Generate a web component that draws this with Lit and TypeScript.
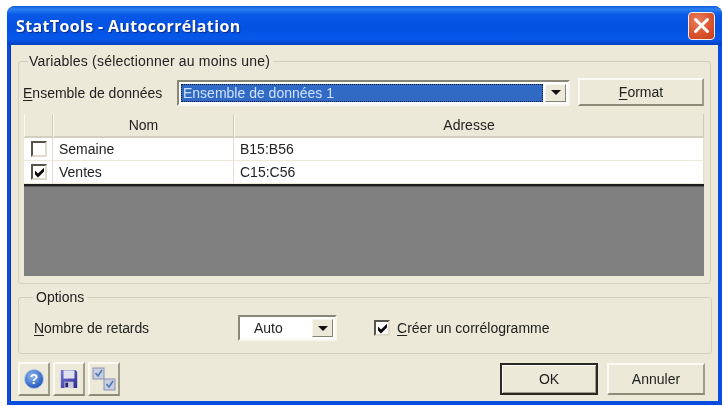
import { LitElement, html, css } from "lit";
import { customElement } from "lit/decorators.js";

@customElement("app-root")
export class AppRoot extends LitElement {
  static styles = css`
    :host { display: block; width: 723px; height: 406px; background: #fff; overflow: hidden;
      font-family: "Liberation Sans", sans-serif; font-size: 14px; color: #222; }
    * { box-sizing: border-box; }
    .page { padding: 6px 1px 0 7px; height: 406px; filter: blur(0.35px); }
    .window { height: 399px; display: flex; flex-direction: column; border-radius: 8px 8px 0 0; overflow: hidden;
      background: #0a4be0; }
    .title { height: 39px; flex: none; display: flex; align-items: center; justify-content: space-between;
      padding: 0 7px 0 9px;
      background: linear-gradient(180deg, #0f5cdc 0%, #2a80f0 8%, #0a58e6 22%, #0452e2 55%, #0658ea 85%, #0340c0 100%); }
    .title-text { color: #fff; font-family: "Open Sans", sans-serif; font-weight: 700; font-size: 16px; letter-spacing: 0.35px;
      text-shadow: 1px 1px 1px #0a2a80; white-space: nowrap; }
    .close { width: 27px; height: 28px; border: 1px solid #f4f0ee; border-radius: 4px; display: flex; align-items: center; justify-content: center;
      background: radial-gradient(circle at 35% 30%, #e8805e, #d9502c 60%, #c23f20); }
    .body { flex: 1; margin: 0 4px 4px 4px; background: #ece9d8; padding: 8px 6px 0 7px; display: flex; flex-direction: column; min-height: 0;
      box-shadow: -1px 0 0 #0636b8; }
    fieldset { margin: 0; min-width: 0; border: 1px solid #d2cfbe; border-radius: 3px; }
    legend { height: 16px; line-height: 16px; white-space: nowrap; }
    .vars { width: 693px; height: 231px; padding: 10px 6px 6px 4px; flex: none; }
    .vars legend { margin-left: 5px; padding: 0 3px 0 1px; letter-spacing: 0.19px; }
    .opts { width: 694px; height: 65px; margin-top: 5px; padding: 10px 0 0 15px; flex: none; display: flex; }
    .opts legend { margin-left: -1px; padding: 0 3px; }
    .row { display: flex; align-items: center; }
    .inner-opts { display: flex; align-items: center; height: 26px; }
    .label { width: 154px; flex: none; white-space: nowrap; line-height: 16px; }
    .label.n { letter-spacing: -0.1px; }
    u { text-underline-offset: 2px; }
    .combo { width: 393px; height: 26px; display: flex; padding: 2px; background: #fff;
      border: 2px solid; border-color: #8a8778 #f7f6ef #f7f6ef #8a8778; }
    .selected { flex: 1; background: #316ac5; color: #cfe0ff; border: 1px dotted #0b1b3a; padding-left: 1px; line-height: 16px; white-space: nowrap; }
    .arrow { width: 21px; flex: none; margin-left: 2px; background: #ece9d8; border: 1px solid; border-color: #f7f6ef #85826f #85826f #f7f6ef;
      display: flex; align-items: center; justify-content: center; }
    .arrow::after { content: ""; border: 5px solid transparent; border-top: 5px solid #111; border-bottom: 0; }
    .btn { background: #ece9d8; border: 2px solid; border-color: #fbfaf4 #a09c8a #8d8a78 #fbfaf4; display: flex; align-items: center; justify-content: center;
      white-space: nowrap; flex: none; }
    .format { width: 126px; height: 28px; margin-left: 8px; margin-top: -1px; }
    .table { margin: 8px 0 0 1px; width: 680px; height: 162px; display: flex; flex-direction: column; background: #808080; }
    .tr { display: grid; grid-template-columns: 29px 181px 1fr; flex: none; }
    .head { height: 24px; background: #ece9d8; }
    .head > div { display: flex; align-items: center; justify-content: center; border-right: 1px solid #cfccba; border-left: 1px solid #fbfaf4; border-bottom: 2px solid #d4d0bf; }
    .data { height: 23px; background: #fff; }
    .data > div { display: flex; align-items: center; padding-left: 6px; border-right: 1px solid #e2dfd0; border-bottom: 1px solid #ece9d8; }
    .data > div:first-child { padding-left: 7px; }
    .data:last-of-type { height: 21px; }
    .rule { height: 3px; flex: none; background: #1c1c1c; border-bottom: 1px solid #555; }
    .cb { width: 16px; height: 16px; background: #fff; border: 2px solid; border-color: #55534a #dedbcb #dedbcb #55534a; display: flex; align-items: center; justify-content: center; flex: none; }
    .auto { width: 99px; height: 26px; margin-left: 50px; display: flex; background: #fff; padding: 2px; border: 2px solid; border-color: #8a8778 #f7f6ef #f7f6ef #8a8778; }
    .auto span { flex: 1; padding-left: 12px; display: flex; align-items: center; }
    .chk { display: flex; align-items: center; margin-left: 37px; gap: 7px; white-space: nowrap; }
    .foot { flex: 1; display: flex; align-items: flex-start; padding-top: 9px; }
    .tool { width: 32px; height: 34px; margin-right: 3px; margin-top: -1px; }
    .spacer { flex: 1; }
    .act { width: 98px; height: 32px; }
    .ok { border: 2px solid #2b2a22; box-shadow: inset 1px 1px 0 #fff, inset -1px -1px 0 #a09c8a; }
    .cancel { margin: 0 7px 0 9px; }
  `;

  private check() {
    return html`<svg width="11" height="11" viewBox="0 0 11 11"><path d="M1 3.5 L4 6.5 L10 .8 V4.5 L4 10.5 L1 7.5 Z" fill="#0a0a0a"/></svg>`;
  }

  render() {
    return html`<div class="page"><div class="window">
      <div class="title">
        <span class="title-text">StatTools - Autocorrélation</span>
        <div class="close"><svg width="19" height="19" viewBox="0 0 19 19"><path d="M3.5 3.5 L15.5 15.5 M15.5 3.5 L3.5 15.5" stroke="#fff" stroke-width="3" stroke-linecap="round"/></svg></div>
      </div>
      <div class="body">
        <fieldset class="vars">
          <legend>Variables (sélectionner au moins une)</legend>
          <div class="row">
            <span class="label"><u>E</u>nsemble de données</span>
            <div class="combo"><div class="selected">Ensemble de données 1</div><div class="arrow"></div></div>
            <div class="btn format"><span><u>F</u>ormat</span></div>
          </div>
          <div class="table">
            <div class="tr head"><div>&nbsp;</div><div>Nom</div><div>Adresse</div></div>
            <div class="tr data"><div><span class="cb"></span></div><div>Semaine</div><div>B15:B56</div></div>
            <div class="tr data"><div><span class="cb">${this.check()}</span></div><div>Ventes</div><div>C15:C56</div></div>
            <div class="rule"></div>
          </div>
        </fieldset>
        <fieldset class="opts">
          <legend>Options</legend>
          <div class="inner-opts">
            <span class="label n"><u>N</u>ombre de retards</span>
            <div class="auto"><span>Auto</span><div class="arrow"></div></div>
            <div class="chk"><span class="cb">${this.check()}</span><span><u>C</u>réer un corrélogramme</span></div>
          </div>
        </fieldset>
        <div class="foot">
          <div class="btn tool"><svg width="22" height="22" viewBox="0 0 22 22">
            <defs><radialGradient id="h" cx="40%" cy="35%" r="70%"><stop offset="0" stop-color="#8fb8f0"/><stop offset="1" stop-color="#1a50b8"/></radialGradient></defs>
            <circle cx="11" cy="11" r="9.5" fill="url(#h)" stroke="#b4c8e4"/>
            <text x="11" y="16" text-anchor="middle" font-family="Liberation Sans" font-weight="700" font-size="14" fill="#fff">?</text></svg></div>
          <div class="btn tool"><svg width="20" height="20" viewBox="0 0 20 22">
            <defs><linearGradient id="f" x1="0" y1="0" x2="1" y2="1"><stop offset="0" stop-color="#7878d8"/><stop offset="1" stop-color="#2a2a90"/></linearGradient></defs>
            <path d="M1 1 H17 L19 3 V21 H1 Z" fill="url(#f)"/>
            <rect x="4" y="1.5" width="12" height="9" fill="#e0e0f0"/>
            <rect x="5" y="14" width="10" height="7" fill="#c8c8dc"/>
            <rect x="6" y="15" width="3" height="5" fill="#22226a"/></svg></div>
          <div class="btn tool"><svg width="26" height="26" viewBox="0 0 26 26">
            <rect x="2" y="2" width="11" height="11" fill="#c9cfe0" stroke="#8a94b4"/>
            <path d="M4.5 7 L7 10 L11 4" fill="none" stroke="#4a7ab8" stroke-width="1.6"/>
            <rect x="13" y="13" width="11" height="11" fill="#c9cfe0" stroke="#8a94b4"/>
            <path d="M15.5 18 L18 21 L22 15" fill="none" stroke="#4a7ab8" stroke-width="1.6"/></svg></div>
          <div class="spacer"></div>
          <div class="btn act ok">OK</div>
          <div class="btn act cancel">Annuler</div>
        </div>
      </div>
    </div></div>`;
  }
}
